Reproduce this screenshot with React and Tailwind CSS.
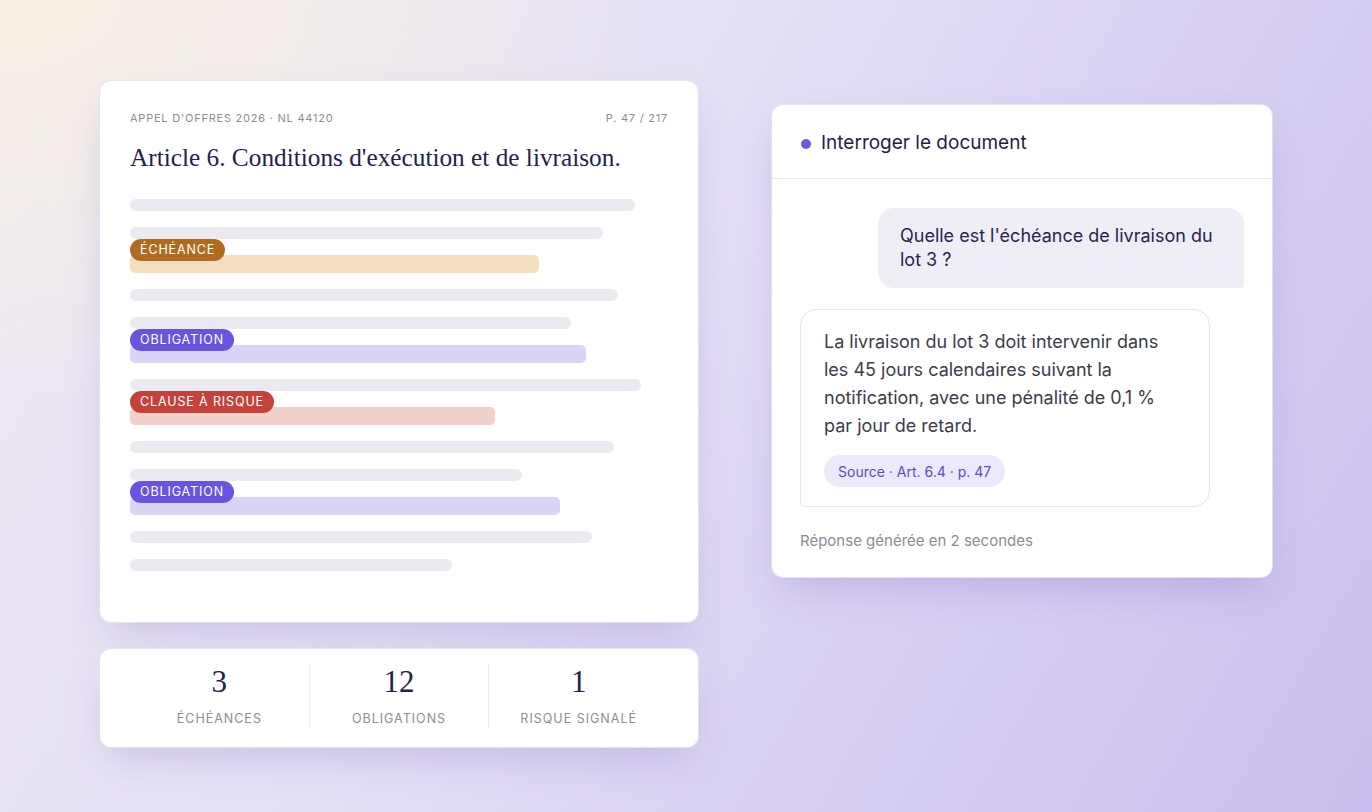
import React from "react";

const sans = "font-['Inter',sans-serif]";
const serif = "font-['Liberation_Serif',serif]";

const rows = [
  { w: 505 },
  { w: 473 },
  { w: 409, tag: "ÉCHÉANCE", bar: "bg-[#f3dfbf]", pill: "bg-[#b26a1f]" },
  { w: 488 },
  { w: 441 },
  { w: 456, tag: "OBLIGATION", bar: "bg-[#dcd4f7]", pill: "bg-[#6953e0]" },
  { w: 511 },
  { w: 365, tag: "CLAUSE À RISQUE", bar: "bg-[#f4d0cb]", pill: "bg-[#c4423a]" },
  { w: 484 },
  { w: 392 },
  { w: 430, tag: "OBLIGATION", bar: "bg-[#dcd4f7]", pill: "bg-[#6953e0]" },
  { w: 462 },
  { w: 322 },
];

function Row({ w, tag, bar, pill }) {
  if (!tag) {
    return <div className="h-3 rounded-full bg-[#ebeaf0]" style={{ width: w }} />;
  }
  return (
    <div className={`relative h-[18px] rounded-[5px] ${bar}`} style={{ width: w }}>
      <span
        className={`absolute left-0 -top-4 h-[22px] px-[10px] rounded-full ${pill} text-white text-[12.5px] tracking-[0.07em] leading-[22px] ${sans}`}
      >
        {tag}
      </span>
    </div>
  );
}

function DocCard() {
  return (
    <div className="h-[543px] rounded-xl bg-white border border-[#e4e1ee] shadow-[0_18px_40px_-10px_rgba(120,100,190,0.28)] px-[30px] pt-[29px]">
      <div className={`flex justify-between text-[11px] tracking-[0.07em] text-[#8d8c97] ${sans}`}>
        <span>APPEL D'OFFRES 2026 · NL 44120</span>
        <span>P. 47 / 217</span>
      </div>
      <h1 className={`mt-[14px] text-[25.3px] leading-[32px] text-[#25224d] ${serif}`}>
        Article 6. Conditions d'exécution et de livraison.
      </h1>
      <div className="mt-[26px] flex flex-col gap-4">
        {rows.map((r, i) => (
          <Row key={i} {...r} />
        ))}
      </div>
    </div>
  );
}

function Stat({ n, label, last }) {
  return (
    <div className={`flex-1 flex flex-col items-center ${last ? "" : "border-r border-[#ebeaf0]"}`}>
      <div className={`text-[31px] leading-[36px] text-[#25224d] ${serif}`}>{n}</div>
      <div className={`mt-[10px] text-[12.5px] tracking-[0.08em] text-[#8d8c97] ${sans}`}>{label}</div>
    </div>
  );
}

function StatsCard() {
  return (
    <div className="mt-[25px] h-[100px] rounded-xl bg-white border border-[#e4e1ee] shadow-[0_18px_40px_-10px_rgba(120,100,190,0.28)] px-[30px] flex items-center">
      <div className="flex w-full pb-[4px]">
        <Stat n="3" label="ÉCHÉANCES" />
        <Stat n="12" label="OBLIGATIONS" />
        <Stat n="1" label="RISQUE SIGNALÉ" last />
      </div>
    </div>
  );
}

function ChatCard() {
  return (
    <div className={`mt-[24px] w-[502px] h-[474px] rounded-xl bg-white border border-[#e4e1ee] shadow-[0_18px_40px_-10px_rgba(120,100,190,0.3)] ${sans}`}>
      <div className="h-[74px] flex items-center gap-[10px] px-[29px] pt-[4px] border-b border-[#ebe9f1]">
        <span className="w-[10px] h-[10px] rounded-full bg-[#6b5ae6]" />
        <span className="text-[19px] text-[#221f3f]">Interroger le document</span>
      </div>
      <div className="px-[28px] pt-[29px]">
        <div className="flex justify-end">
          <div className="w-[366px] rounded-2xl rounded-br-[4px] bg-[#efedf5] px-[22px] py-[16px] text-[18px] leading-[24px] text-[#29244f]">
            Quelle est l'échéance de livraison du lot 3 ?
          </div>
        </div>
        <div className="mt-[21px] w-[410px] rounded-2xl rounded-bl-[4px] border border-[#e6e4ee] bg-white px-[23px] pt-[18px] pb-[19px]">
          <p className="text-[18px] leading-[28px] text-[#3d3c4a]">
            La livraison du lot 3 doit intervenir dans les 45 jours calendaires suivant la notification, avec une pénalité de 0,1 % par jour de retard.
          </p>
          <div className="mt-[15px] flex">
            <span className="h-[32px] flex items-center rounded-full bg-[#ece9fa] px-[14px] text-[14px] text-[#5a4ec2]">
              Source · Art. 6.4 · p. 47
            </span>
          </div>
        </div>
        <div className="mt-[23px] text-[15px] text-[#8d8b98]">Réponse générée en 2 secondes</div>
      </div>
    </div>
  );
}

export default function App() {
  return (
    <div className="w-[1372px] h-[812px] overflow-hidden bg-[radial-gradient(ellipse_at_0%_0%,#f7f0e4_0%,rgba(247,240,228,0)_35%),linear-gradient(120deg,#efe9f1_0%,#e6e1f5_40%,#d8cff3_70%,#cabfee_100%)] flex items-start pl-[99px] pt-[80px] gap-[72px]">
      <div className="w-[600px] flex flex-col">
        <DocCard />
        <StatsCard />
      </div>
      <ChatCard />
    </div>
  );
}
